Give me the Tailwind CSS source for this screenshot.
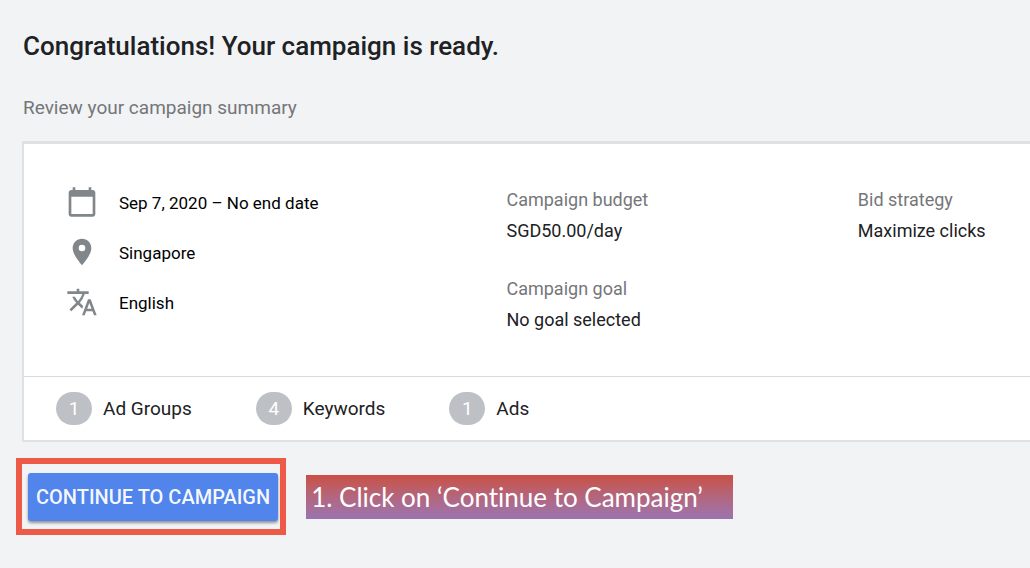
<!doctype html>
<html lang="en">
  <head>
    <meta charset="UTF-8" />
    <meta name="viewport" content="width=device-width, initial-scale=1.0" />
    <title>Campaign ready</title>
    <script src="https://cdn.jsdelivr.net/npm/@tailwindcss/browser@4"></script>
  </head>
  <body class="min-h-screen overflow-x-hidden bg-[#f1f3f5] font-['Roboto',sans-serif] text-[#202124]">
    <main class="pt-7">
      <h1 class="pl-[23px] text-[26px] leading-9 font-medium">
        Congratulations! Your campaign is ready.
      </h1>
      <p class="mt-8 pl-[23px] text-[19px] leading-6 text-[#757679]">
        Review your campaign summary
      </p>

      <!-- Summary card -->
      <section class="mt-[21px] ml-[22px] border-t-3 border-b-2 border-l-2 border-[#e0e1e2] bg-white">
        <div class="grid grid-cols-[440fr_351fr_172fr] pt-10 pb-[41px] pl-[42px]">
          <ul class="flex flex-col gap-[18px] pt-0.5 text-[17px] leading-6 text-black">
            <li class="flex items-center gap-[21px]">
              <svg class="size-8 fill-[#80868a]" viewBox="0 0 24 24" aria-hidden="true">
                <path d="M20 3h-1V1h-2v2H7V1H5v2H4c-1.1 0-2 .9-2 2v16c0 1.1.9 2 2 2h16c1.1 0 2-.9 2-2V5c0-1.1-.9-2-2-2zm0 18H4V8h16v13z" />
              </svg>
              <span class="pt-0.5">Sep 7, 2020 – No end date</span>
            </li>
            <li class="flex items-center gap-[21px]">
              <svg class="size-8 fill-[#80868a]" viewBox="0 0 24 24" aria-hidden="true">
                <path d="M12 2C8.13 2 5 5.13 5 9c0 5.25 7 13 7 13s7-7.75 7-13c0-3.87-3.13-7-7-7zm0 9.5a2.5 2.5 0 0 1 0-5 2.5 2.5 0 0 1 0 5z" />
              </svg>
              <span class="pt-0.5">Singapore</span>
            </li>
            <li class="flex items-center gap-[21px]">
              <svg class="size-8 fill-[#80868a]" viewBox="0 0 24 24" aria-hidden="true">
                <path d="M12.87 15.07l-2.54-2.51.03-.03A17.52 17.52 0 0 0 14.07 6H17V4h-7V2H8v2H1v1.99h11.17C11.5 7.92 10.44 9.75 9 11.35 8.07 10.32 7.3 9.19 6.69 8h-2c.73 1.63 1.73 3.17 2.98 4.56l-5.09 5.02L4 19l5-5 3.11 3.11.76-2.04zM18.5 10h-2L12 22h2l1.12-3h4.75L21 22h2l-4.5-12zm-2.62 7l1.62-4.33L19.12 17h-3.24z" />
              </svg>
              <span class="pt-0.5">English</span>
            </li>
          </ul>

          <dl class="flex flex-col gap-[27px] text-[18px] leading-[31px]">
            <div>
              <dt class="text-[#757679]">Campaign budget</dt>
              <dd>SGD50.00/day</dd>
            </div>
            <div>
              <dt class="text-[#757679]">Campaign goal</dt>
              <dd>No goal selected</dd>
            </div>
          </dl>

          <dl class="text-[18px] leading-[31px]">
            <div>
              <dt class="text-[#757679]">Bid strategy</dt>
              <dd>Maximize clicks</dd>
            </div>
          </dl>
        </div>

        <ul class="flex gap-16 border-t border-[#d9dadb] py-[15px] pl-8 text-[19px] leading-6">
          <li class="flex items-center gap-[11px]">
            <span class="flex h-[33px] w-9 items-center justify-center rounded-full bg-[#bdc1c6] text-white">1</span>
            Ad Groups
          </li>
          <li class="flex items-center gap-[11px]">
            <span class="flex h-[33px] w-9 items-center justify-center rounded-full bg-[#bdc1c6] text-white">4</span>
            Keywords
          </li>
          <li class="flex items-center gap-[11px]">
            <span class="flex h-[33px] w-9 items-center justify-center rounded-full bg-[#bdc1c6] text-white">1</span>
            Ads
          </li>
        </ul>
      </section>

      <!-- Action and instruction -->
      <div class="mt-4 flex items-center gap-5 pl-4">
        <div class="border-6 border-[#ee5a48] pt-[9px] pr-0.5 pb-2 pl-1.5">
          <button
            type="button"
            class="h-12 rounded-[3px] bg-[#5185ec] px-2 text-[20px] leading-6 font-medium text-white/95 shadow-[0_2px_3px_rgba(0,0,0,0.4)]"
          >
            CONTINUE TO CAMPAIGN
          </button>
        </div>
        <p class="bg-linear-to-b from-[#c94f43] to-[#9a74b0] py-1 pr-[30px] pl-[5px] font-['Lato',sans-serif] text-[26px] leading-9 text-white [font-variant-ligatures:none]">
          1. Click on ‘Continue to Campaign’
        </p>
      </div>
    </main>
  </body>
</html>
